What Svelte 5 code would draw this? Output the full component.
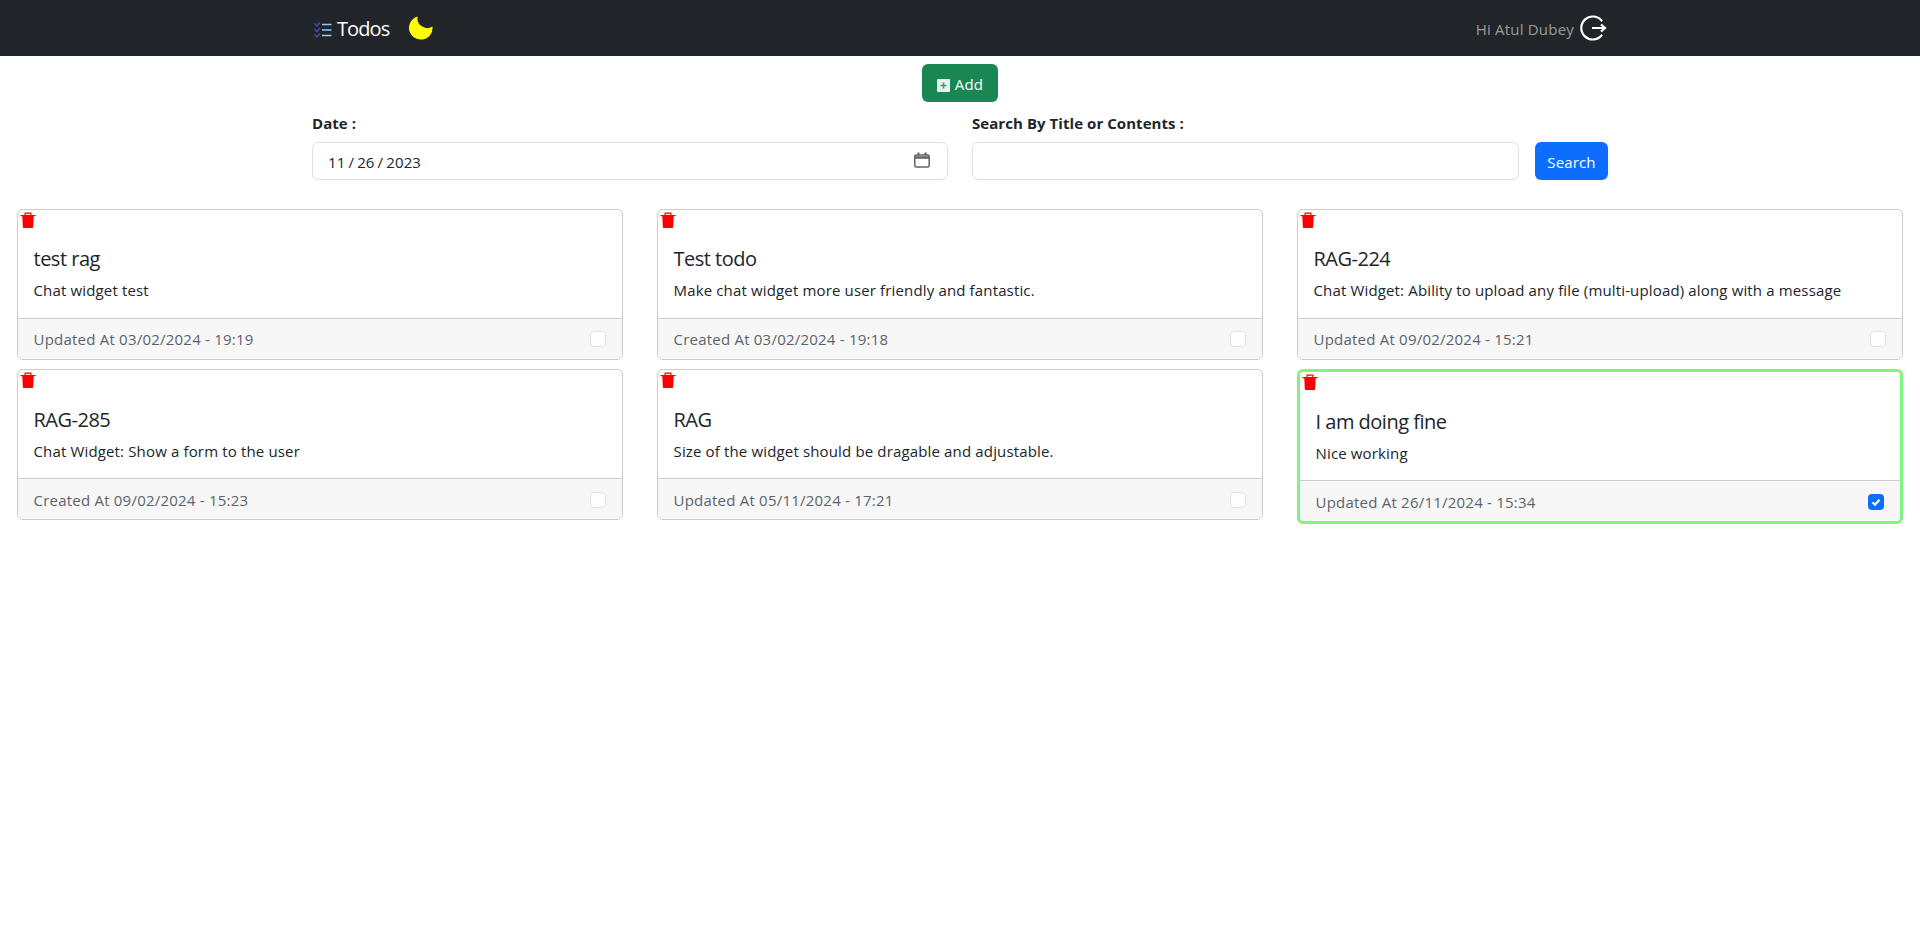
<script>
	const todos = [
		{ title: 'test rag', body: 'Chat widget test', stamp: 'Updated At 03/02/2024 - 19:19', done: false },
		{ title: 'Test todo', body: 'Make chat widget more user friendly and fantastic.', stamp: 'Created At 03/02/2024 - 19:18', done: false },
		{ title: 'RAG-224', body: 'Chat Widget: Ability to upload any file (multi-upload) along with a message', stamp: 'Updated At 09/02/2024 - 15:21', done: false },
		{ title: 'RAG-285', body: 'Chat Widget: Show a form to the user', stamp: 'Created At 09/02/2024 - 15:23', done: false },
		{ title: 'RAG', body: 'Size of the widget should be dragable and adjustable.', stamp: 'Updated At 05/11/2024 - 17:21', done: false },
		{ title: 'I am doing fine', body: 'Nice working', stamp: 'Updated At 26/11/2024 - 15:34', done: true }
	];
</script>

<nav>
	<div class="container nav-inner">
		<div class="brand">
			<svg class="logo" width="18" height="16" viewBox="0 0 18 16" fill="none">
				<path d="M0.500 1.500l2.500 2.500 3-3.500M0.500 7l2.500 2.500 3-3.500M0.500 12.500l2.500 2.500 3-3.500" stroke="#3f51b5" stroke-width="1.300" />
				<path d="M8 2.500h9.500M8 8h9.500M8 13.500h9.500" stroke="#90caf9" stroke-width="1.700" />
			</svg>
			<span class="brand-name">Todos</span>
			<svg class="moon" width="24" height="24" viewBox="0 0 23 23">
				<path d="M8.300 0.400A11.300 11.300 0 1 0 22.500 10A9.300 9.300 0 0 1 8.300 0.400Z" fill="#ffff00" />
			</svg>
		</div>
		<div class="user">
			<span>Hi Atul Dubey</span>
			<svg width="28" height="28" viewBox="0 0 28 28" fill="none" stroke="#fff" stroke-width="2.200">
				<path d="M21.500 6.500A11.500 11.500 0 1 0 21.500 21.500" stroke-linecap="round" />
				<path d="M12 14h13M21 10.500l4 3.500-4 3.500" />
			</svg>
		</div>
	</div>
</nav>

<main>
	<div class="add-row">
		<button class="btn btn-add">
			<svg width="13" height="13" viewBox="0 0 13 13">
				<rect width="13" height="13" rx="1" fill="#e8f3ee" />
				<path d="M6.500 3.500v6M3.500 6.500h6" stroke="#3f9c72" stroke-width="1.600" />
			</svg>
			<span>Add</span>
		</button>
	</div>

	<div class="container filters">
		<div class="field date">
			<label for="date">Date :</label>
			<div class="input">
				<span id="date">11 / 26 / 2023</span>
				<svg width="16" height="16" viewBox="0 0 16 16" fill="none" stroke="#5f6368" stroke-width="1.500">
					<rect x="0.800" y="3" width="14.400" height="12" rx="1.500" />
					<path d="M0.800 5.500h14.400" stroke-width="2.500" />
					<path d="M4.500 0.500v3M11.500 0.500v3" stroke-width="2" />
				</svg>
			</div>
		</div>
		<div class="field search">
			<label for="search">Search By Title or Contents :</label>
			<input id="search" class="input" type="text" />
		</div>
		<button class="btn btn-search"><span>Search</span></button>
	</div>

	<div class="grid">
		{#each todos as todo}
			<article class="card" class:done={todo.done}>
				<svg class="trash" width="16" height="16" viewBox="0 0 16 16" fill="#ff0000">
					<path d="M0.500 3h15v1.300h-15zM4.500 0.500h7v2.500h-1.200v-1.300H5.700V3H4.500zM2.300 4h11.400l-0.500 11a1 1 0 0 1-1 1H3.800a1 1 0 0 1-1-1z" />
				</svg>
				<div class="card-body">
					<h5>{todo.title}</h5>
					<p>{todo.body}</p>
				</div>
				<div class="card-footer">
					<span>{todo.stamp}</span>
					<span class="check" class:checked={todo.done}>
						{#if todo.done}
							<svg width="16" height="16" viewBox="0 0 16 16" fill="none">
								<path d="M4.500 8.300l2.500 2.400 4.500-5" stroke="#fff" stroke-width="2.200" />
							</svg>
						{/if}
					</span>
				</div>
			</article>
		{/each}
	</div>
</main>

<style>
	:global(*, *::before, *::after) {
		box-sizing: border-box;
	}

	:global(body) {
		font-family: 'Open Sans', 'Noto Sans', sans-serif;
		font-size: 15px;
		letter-spacing: 0.15px;
		color: #212529;
		background: #fff;
	}

	.container {
		width: 1320px;
		margin: 0 auto;
		padding: 0 12px;
	}

	nav {
		height: 56px;
		background: #212529;
	}

	.nav-inner {
		height: 100%;
		display: flex;
		align-items: center;
		justify-content: space-between;
	}

	.brand {
		display: flex;
		align-items: center;
	}

	.logo {
		margin: 4px 5px 0 2px;
	}

	.brand-name {
		font-size: 20px;
		color: #fff;
		letter-spacing: -0.9px;
	}

	.moon {
		margin: -1px 0 0 20px;
	}

	.user {
		display: flex;
		align-items: center;
		gap: 6px;
		color: rgba(255, 255, 255, 0.55);
	}

	.user span {
		margin-top: 1px;
		letter-spacing: 0.2px;
	}

	.add-row {
		display: flex;
		justify-content: center;
		padding-top: 8px;
	}

	.btn {
		border: 1px solid transparent;
		border-radius: 6px;
		color: #fff;
		font: inherit;
		letter-spacing: inherit;
		height: 38px;
		padding: 0;
	}

	.btn span {
		position: relative;
		top: 1px;
	}

	.btn-add {
		width: 76px;
		background: #198754;
		display: flex;
		align-items: center;
		justify-content: center;
		gap: 5px;
	}

	.btn-add svg {
		margin-top: 5px;
	}

	.filters {
		display: flex;
		align-items: flex-end;
		margin-top: 11px;
	}

	.field {
		display: flex;
		flex-direction: column;
	}

	.date {
		width: 636px;
		margin-right: 24px;
	}

	.search {
		width: 547px;
		margin-right: 16px;
	}

	label {
		font-size: 15px;
		font-weight: 700;
		letter-spacing: 0.06px;
		line-height: 20px;
		margin-bottom: 9px;
	}

	.input {
		height: 38px;
		border: 1px solid #dee2e6;
		border-radius: 6px;
		background: #fff;
		padding: 0 16px 0 15px;
		display: flex;
		align-items: center;
		justify-content: space-between;
		outline: none;
	}

	#date {
		letter-spacing: 0.1px;
		word-spacing: -0.900px;
		margin-top: 1px;
	}

	.input svg {
		margin: -2px 1px 0 0;
	}

	.btn-search {
		width: 73px;
		background: #0d6efd;
	}

	.grid {
		display: grid;
		grid-template-columns: repeat(3, 1fr);
		column-gap: 34px;
		row-gap: 9px;
		align-items: start;
		padding: 0 17px;
		margin-top: 29px;
	}

	.card {
		position: relative;
		border: 1px solid #ccc;
		border-radius: 6px;
		background: #fff;
	}

	.card.done {
		border: 3px solid #7ef57e;
	}

	.trash {
		position: absolute;
		left: 2px;
		top: 2px;
	}

	.card-body {
		padding: 37px 16px 15px;
		height: 108px;
	}

	.card:nth-child(n + 4) .card-body {
		padding-top: 38px;
	}

	.card:nth-child(n + 4) .card-footer {
		padding-top: 2px;
	}

	h5 {
		margin: 0 0 8px;
		font-size: 20px;
		font-weight: 400;
		line-height: 24px;
		letter-spacing: -0.5px;
		margin-left: -0.500px;
	}

	p {
		margin: -1px 0 0;
		line-height: 24px;
		margin-left: -0.500px;
	}

	.card-footer {
		height: 41px;
		border-top: 1px solid #ccc;
		border-radius: 0 0 5px 5px;
		background: #f7f7f7;
		padding: 0 16px;
		display: flex;
		align-items: center;
		justify-content: space-between;
		color: #5c636a;
		letter-spacing: 0.22px;
	}

	.card-footer > span:first-child {
		margin-left: -0.500px;
	}

	.check {
		width: 16px;
		height: 16px;
		border: 1px solid #dee2e6;
		border-radius: 4px;
		background: #fff;
	}

	.check.checked {
		border: none;
		background: #0d6efd;
	}

	.check svg {
		display: block;
	}
</style>
